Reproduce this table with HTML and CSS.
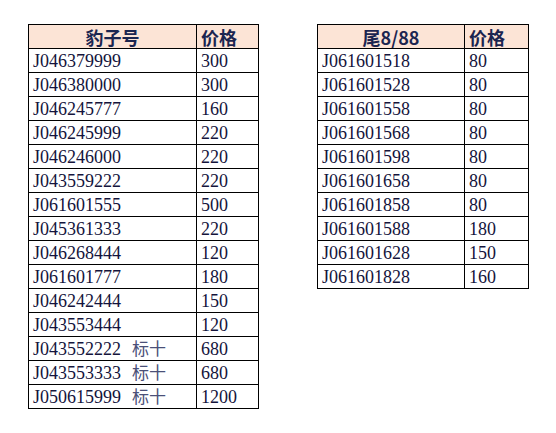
FILE: index.html
```html
<!DOCTYPE html>
<html>
<head>
<meta charset="utf-8">
<link rel="stylesheet" href="styles.css">
</head>
<body>
<div class="page">
  <table class="sheet sheet-a">
    <colgroup><col class="c1a"><col class="c2a"></colgroup>
    <thead>
      <tr><th class="center">豹子号</th><th>价格</th></tr>
    </thead>
    <tbody>
      <tr><td>J046379999</td><td>300</td></tr>
      <tr><td>J046380000</td><td>300</td></tr>
      <tr><td>J046245777</td><td>160</td></tr>
      <tr><td>J046245999</td><td>220</td></tr>
      <tr><td>J046246000</td><td>220</td></tr>
      <tr><td>J043559222</td><td>220</td></tr>
      <tr><td>J061601555</td><td>500</td></tr>
      <tr><td>J045361333</td><td>220</td></tr>
      <tr><td>J046268444</td><td>120</td></tr>
      <tr><td>J061601777</td><td>180</td></tr>
      <tr><td>J046242444</td><td>150</td></tr>
      <tr><td>J043553444</td><td>120</td></tr>
      <tr><td>J043552222<span class="tag">标十</span></td><td>680</td></tr>
      <tr><td>J043553333<span class="tag">标十</span></td><td>680</td></tr>
      <tr><td>J050615999<span class="tag">标十</span></td><td>1200</td></tr>
    </tbody>
  </table>
  <table class="sheet sheet-b">
    <colgroup><col class="c1b"><col class="c2b"></colgroup>
    <thead>
      <tr><th class="center">尾8/88</th><th>价格</th></tr>
    </thead>
    <tbody>
      <tr><td>J061601518</td><td>80</td></tr>
      <tr><td>J061601528</td><td>80</td></tr>
      <tr><td>J061601558</td><td>80</td></tr>
      <tr><td>J061601568</td><td>80</td></tr>
      <tr><td>J061601598</td><td>80</td></tr>
      <tr><td>J061601658</td><td>80</td></tr>
      <tr><td>J061601858</td><td>80</td></tr>
      <tr><td>J061601588</td><td>180</td></tr>
      <tr><td>J061601628</td><td>150</td></tr>
      <tr><td>J061601828</td><td>160</td></tr>
    </tbody>
  </table>
</div>
</body>
</html>
```
FILE: styles.css
```css
html, body {
  margin: 0;
  padding: 0;
  background: #ffffff;
}
.page {
  display: flex;
  align-items: flex-start;
  gap: 58px;
  padding: 24px 0 0 28px;
  font-family: "Liberation Serif", "Noto Sans CJK SC", serif;
  font-size: 18px;
  color: #14143c;
}
.sheet {
  border-collapse: collapse;
  table-layout: fixed;
}
.sheet-a { width: 230px; }
.sheet-b { width: 211px; }
.c1a { width: 168px; }
.c2a { width: 62px; }
.c1b { width: 147px; }
.c2b { width: 64px; }
.sheet th, .sheet td {
  border: 1px solid #000;
  height: 23px;
  padding: 0 0 0 4px;
  text-align: left;
  vertical-align: middle;
  white-space: nowrap;
  line-height: 22px;
}
.sheet th {
  background: #fce4d6;
  font-family: "Noto Sans CJK SC", sans-serif;
  font-weight: bold;
  font-size: 18px;
  color: #1b2550;
}
.sheet th.center {
  text-align: center;
  padding: 0;
}
.sheet-b th, .sheet-b td {
  padding-left: 4px;
}
.tag {
  font-family: "Noto Sans CJK SC", sans-serif;
  font-size: 17px;
  color: #4a5078;
  margin-left: 11px;
}
```
